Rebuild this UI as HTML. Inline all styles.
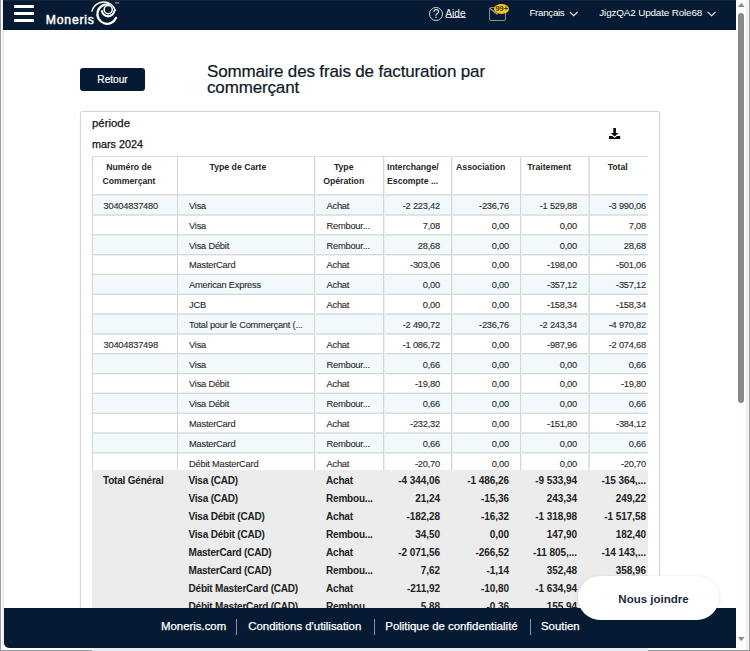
<!DOCTYPE html>
<html><head><meta charset="utf-8">
<style>
*{box-sizing:border-box;margin:0;padding:0}
html,body{width:750px;height:651px;overflow:hidden;background:#fff;font-family:"Liberation Sans",sans-serif;}
.abs{position:absolute}
.t{position:absolute;white-space:nowrap;line-height:1}
</style></head><body>

<div class="abs" style="left:0;top:0;width:1px;height:651px;background:#9a9a9a"></div>
<div class="abs" style="left:2px;top:0;width:2px;height:651px;background:#efefef"></div>
<div class="abs" style="left:0;top:650px;width:750px;height:1px;background:#9a9a9a"></div>
<div class="abs" style="left:80px;top:111px;width:580px;height:536px;border:1px solid #d6d6d6;border-radius:2px;box-shadow:0 0 3px rgba(0,0,0,0.06)"></div>
<div class="t" style="left:92px;top:117.6px;font-size:11.4px;color:#141414;-webkit-text-stroke:0.25px #141414">période</div>
<div class="t" style="left:92px;top:139.2px;font-size:10.8px;color:#141414;-webkit-text-stroke:0.25px #141414">mars 2024</div>
<svg class="abs" style="left:608px;top:127px" width="14" height="14" viewBox="0 0 14 14">
<path d="M5.3 1h2.6v5h2.6L6.6 9.6 2.7 6h2.6z" fill="#000"/>
<path d="M1 9h3.2l2.4 2 2.4-2H12.2v3H1z" fill="#000"/></svg>
<div class="abs" style="left:92px;top:156px;width:556px;height:500px;overflow:hidden">
<div class="abs" style="left:0;top:39.50px;width:600px;height:19.82px;background:#f2f9fc"></div>
<div class="abs" style="left:0;top:79.14px;width:600px;height:19.82px;background:#f2f9fc"></div>
<div class="abs" style="left:0;top:118.78px;width:600px;height:19.82px;background:#f2f9fc"></div>
<div class="abs" style="left:0;top:158.42px;width:600px;height:19.82px;background:#f2f9fc"></div>
<div class="abs" style="left:0;top:198.06px;width:600px;height:19.82px;background:#f2f9fc"></div>
<div class="abs" style="left:0;top:237.70px;width:600px;height:19.82px;background:#f2f9fc"></div>
<div class="abs" style="left:0;top:277.34px;width:600px;height:19.82px;background:#f2f9fc"></div>
<div class="abs" style="left:0;top:-1px;width:600px;height:1px;background:rgb(230,230,230)"></div>
<div class="abs" style="left:0;top:0px;width:600px;height:1px;background:rgb(222,222,222)"></div>
<div class="abs" style="left:0;top:38px;width:600px;height:1px;background:rgb(222,222,222)"></div>
<div class="abs" style="left:0;top:39px;width:600px;height:1px;background:rgb(230,230,230)"></div>
<div class="abs" style="left:0;top:58px;width:600px;height:1px;background:rgb(226,226,226)"></div>
<div class="abs" style="left:0;top:59px;width:600px;height:1px;background:rgb(226,226,226)"></div>
<div class="abs" style="left:0;top:78px;width:600px;height:1px;background:rgb(219,219,219)"></div>
<div class="abs" style="left:0;top:79px;width:600px;height:1px;background:rgb(234,234,234)"></div>
<div class="abs" style="left:0;top:97px;width:600px;height:1px;background:rgb(253,253,253)"></div>
<div class="abs" style="left:0;top:98px;width:600px;height:1px;background:rgb(214,214,214)"></div>
<div class="abs" style="left:0;top:99px;width:600px;height:1px;background:rgb(241,241,241)"></div>
<div class="abs" style="left:0;top:117px;width:600px;height:1px;background:rgb(245,245,245)"></div>
<div class="abs" style="left:0;top:118px;width:600px;height:1px;background:rgb(214,214,214)"></div>
<div class="abs" style="left:0;top:119px;width:600px;height:1px;background:rgb(248,248,248)"></div>
<div class="abs" style="left:0;top:137px;width:600px;height:1px;background:rgb(238,238,238)"></div>
<div class="abs" style="left:0;top:138px;width:600px;height:1px;background:rgb(215,215,215)"></div>
<div class="abs" style="left:0;top:157px;width:600px;height:1px;background:rgb(230,230,230)"></div>
<div class="abs" style="left:0;top:158px;width:600px;height:1px;background:rgb(222,222,222)"></div>
<div class="abs" style="left:0;top:177px;width:600px;height:1px;background:rgb(223,223,223)"></div>
<div class="abs" style="left:0;top:178px;width:600px;height:1px;background:rgb(230,230,230)"></div>
<div class="abs" style="left:0;top:197px;width:600px;height:1px;background:rgb(216,216,216)"></div>
<div class="abs" style="left:0;top:198px;width:600px;height:1px;background:rgb(237,237,237)"></div>
<div class="abs" style="left:0;top:216px;width:600px;height:1px;background:rgb(249,249,249)"></div>
<div class="abs" style="left:0;top:217px;width:600px;height:1px;background:rgb(214,214,214)"></div>
<div class="abs" style="left:0;top:218px;width:600px;height:1px;background:rgb(244,244,244)"></div>
<div class="abs" style="left:0;top:236px;width:600px;height:1px;background:rgb(242,242,242)"></div>
<div class="abs" style="left:0;top:237px;width:600px;height:1px;background:rgb(214,214,214)"></div>
<div class="abs" style="left:0;top:238px;width:600px;height:1px;background:rgb(252,252,252)"></div>
<div class="abs" style="left:0;top:256px;width:600px;height:1px;background:rgb(234,234,234)"></div>
<div class="abs" style="left:0;top:257px;width:600px;height:1px;background:rgb(218,218,218)"></div>
<div class="abs" style="left:0;top:276px;width:600px;height:1px;background:rgb(227,227,227)"></div>
<div class="abs" style="left:0;top:277px;width:600px;height:1px;background:rgb(225,225,225)"></div>
<div class="abs" style="left:0;top:296px;width:600px;height:1px;background:rgb(220,220,220)"></div>
<div class="abs" style="left:0;top:297px;width:600px;height:1px;background:rgb(233,233,233)"></div>
<div class="abs" style="left:0;top:315px;width:600px;height:1px;background:rgb(253,253,253)"></div>
<div class="abs" style="left:0;top:316px;width:600px;height:1px;background:rgb(214,214,214)"></div>
<div class="abs" style="left:0;top:317px;width:600px;height:1px;background:rgb(240,240,240)"></div>
<div class="abs" style="left:0px;top:0;width:1px;height:480px;background:rgb(214,214,214)"></div>
<div class="abs" style="left:85px;top:0;width:1px;height:480px;background:rgb(214,214,214)"></div>
<div class="abs" style="left:222px;top:0;width:1px;height:480px;background:rgb(214,214,214)"></div>
<div class="abs" style="left:223px;top:0;width:1px;height:480px;background:rgb(243,243,243)"></div>
<div class="abs" style="left:291px;top:0;width:1px;height:480px;background:rgb(214,214,214)"></div>
<div class="abs" style="left:292px;top:0;width:1px;height:480px;background:rgb(239,239,239)"></div>
<div class="abs" style="left:359px;top:0;width:1px;height:480px;background:rgb(218,218,218)"></div>
<div class="abs" style="left:360px;top:0;width:1px;height:480px;background:rgb(234,234,234)"></div>
<div class="abs" style="left:428px;top:0;width:1px;height:480px;background:rgb(214,214,214)"></div>
<div class="abs" style="left:429px;top:0;width:1px;height:480px;background:rgb(243,243,243)"></div>
<div class="abs" style="left:496px;top:0;width:1px;height:480px;background:rgb(230,230,230)"></div>
<div class="abs" style="left:497px;top:0;width:1px;height:480px;background:rgb(222,222,222)"></div>
<div class="abs" style="left:3.00px;top:3.5999999999999943px;width:67.90px;text-align:center;font-size:8.7px;font-weight:bold;line-height:14.3px;color:#262626;white-space:nowrap">Numéro de<br>Commerçant</div>
<div class="abs" style="left:86.00px;top:3.5999999999999943px;width:119.90px;text-align:center;font-size:8.7px;font-weight:bold;line-height:14.3px;color:#262626;white-space:nowrap">Type de Carte</div>
<div class="abs" style="left:226.00px;top:3.5999999999999943px;width:51.40px;text-align:center;font-size:8.7px;font-weight:bold;line-height:14.3px;color:#262626;white-space:nowrap">Type<br>Opération</div>
<div class="abs" style="left:295.00px;top:3.5999999999999943px;width:50.40px;text-align:center;font-size:8.7px;font-weight:bold;line-height:14.3px;color:#262626;white-space:nowrap">Interchange/<br>Escompte ...</div>
<div class="abs" style="left:363.00px;top:3.5999999999999943px;width:51.40px;text-align:center;font-size:8.7px;font-weight:bold;line-height:14.3px;color:#262626;white-space:nowrap">Association</div>
<div class="abs" style="left:432.00px;top:3.5999999999999943px;width:50.40px;text-align:center;font-size:8.7px;font-weight:bold;line-height:14.3px;color:#262626;white-space:nowrap">Traitement</div>
<div class="abs" style="left:500.00px;top:3.5999999999999943px;width:51.40px;text-align:center;font-size:8.7px;font-weight:bold;line-height:14.3px;color:#262626;white-space:nowrap">Total</div>
<div class="t" style="left:11.50px;top:46.00px;font-size:9.3px;letter-spacing:-0.22px;color:#2b2b2b;-webkit-text-stroke:0.12px #2b2b2b">30404837480</div>
<div class="t" style="left:97.00px;top:46.00px;font-size:9.3px;letter-spacing:-0.22px;color:#2b2b2b;-webkit-text-stroke:0.12px #2b2b2b">Visa</div>
<div class="t" style="left:234.50px;top:46.00px;font-size:9.3px;letter-spacing:-0.22px;color:#2b2b2b;-webkit-text-stroke:0.12px #2b2b2b">Achat</div>
<div class="t" style="left:292.00px;width:56.00px;text-align:right;top:46.00px;font-size:9.3px;letter-spacing:-0.22px;color:#2b2b2b;-webkit-text-stroke:0.12px #2b2b2b">-2 223,42</div>
<div class="t" style="left:360.00px;width:57.00px;text-align:right;top:46.00px;font-size:9.3px;letter-spacing:-0.22px;color:#2b2b2b;-webkit-text-stroke:0.12px #2b2b2b">-236,76</div>
<div class="t" style="left:429.00px;width:56.00px;text-align:right;top:46.00px;font-size:9.3px;letter-spacing:-0.22px;color:#2b2b2b;-webkit-text-stroke:0.12px #2b2b2b">-1 529,88</div>
<div class="t" style="left:497.00px;width:57.00px;text-align:right;top:46.00px;font-size:9.3px;letter-spacing:-0.22px;color:#2b2b2b;-webkit-text-stroke:0.12px #2b2b2b">-3 990,06</div>
<div class="t" style="left:97.00px;top:65.82px;font-size:9.3px;letter-spacing:-0.22px;color:#2b2b2b;-webkit-text-stroke:0.12px #2b2b2b">Visa</div>
<div class="t" style="left:234.50px;top:65.82px;font-size:9.3px;letter-spacing:-0.22px;color:#2b2b2b;-webkit-text-stroke:0.12px #2b2b2b">Rembour...</div>
<div class="t" style="left:292.00px;width:56.00px;text-align:right;top:65.82px;font-size:9.3px;letter-spacing:-0.22px;color:#2b2b2b;-webkit-text-stroke:0.12px #2b2b2b">7,08</div>
<div class="t" style="left:360.00px;width:57.00px;text-align:right;top:65.82px;font-size:9.3px;letter-spacing:-0.22px;color:#2b2b2b;-webkit-text-stroke:0.12px #2b2b2b">0,00</div>
<div class="t" style="left:429.00px;width:56.00px;text-align:right;top:65.82px;font-size:9.3px;letter-spacing:-0.22px;color:#2b2b2b;-webkit-text-stroke:0.12px #2b2b2b">0,00</div>
<div class="t" style="left:497.00px;width:57.00px;text-align:right;top:65.82px;font-size:9.3px;letter-spacing:-0.22px;color:#2b2b2b;-webkit-text-stroke:0.12px #2b2b2b">7,08</div>
<div class="t" style="left:97.00px;top:85.64px;font-size:9.3px;letter-spacing:-0.22px;color:#2b2b2b;-webkit-text-stroke:0.12px #2b2b2b">Visa Débit</div>
<div class="t" style="left:234.50px;top:85.64px;font-size:9.3px;letter-spacing:-0.22px;color:#2b2b2b;-webkit-text-stroke:0.12px #2b2b2b">Rembour...</div>
<div class="t" style="left:292.00px;width:56.00px;text-align:right;top:85.64px;font-size:9.3px;letter-spacing:-0.22px;color:#2b2b2b;-webkit-text-stroke:0.12px #2b2b2b">28,68</div>
<div class="t" style="left:360.00px;width:57.00px;text-align:right;top:85.64px;font-size:9.3px;letter-spacing:-0.22px;color:#2b2b2b;-webkit-text-stroke:0.12px #2b2b2b">0,00</div>
<div class="t" style="left:429.00px;width:56.00px;text-align:right;top:85.64px;font-size:9.3px;letter-spacing:-0.22px;color:#2b2b2b;-webkit-text-stroke:0.12px #2b2b2b">0,00</div>
<div class="t" style="left:497.00px;width:57.00px;text-align:right;top:85.64px;font-size:9.3px;letter-spacing:-0.22px;color:#2b2b2b;-webkit-text-stroke:0.12px #2b2b2b">28,68</div>
<div class="t" style="left:97.00px;top:105.46px;font-size:9.3px;letter-spacing:-0.22px;color:#2b2b2b;-webkit-text-stroke:0.12px #2b2b2b">MasterCard</div>
<div class="t" style="left:234.50px;top:105.46px;font-size:9.3px;letter-spacing:-0.22px;color:#2b2b2b;-webkit-text-stroke:0.12px #2b2b2b">Achat</div>
<div class="t" style="left:292.00px;width:56.00px;text-align:right;top:105.46px;font-size:9.3px;letter-spacing:-0.22px;color:#2b2b2b;-webkit-text-stroke:0.12px #2b2b2b">-303,06</div>
<div class="t" style="left:360.00px;width:57.00px;text-align:right;top:105.46px;font-size:9.3px;letter-spacing:-0.22px;color:#2b2b2b;-webkit-text-stroke:0.12px #2b2b2b">0,00</div>
<div class="t" style="left:429.00px;width:56.00px;text-align:right;top:105.46px;font-size:9.3px;letter-spacing:-0.22px;color:#2b2b2b;-webkit-text-stroke:0.12px #2b2b2b">-198,00</div>
<div class="t" style="left:497.00px;width:57.00px;text-align:right;top:105.46px;font-size:9.3px;letter-spacing:-0.22px;color:#2b2b2b;-webkit-text-stroke:0.12px #2b2b2b">-501,06</div>
<div class="t" style="left:97.00px;top:125.28px;font-size:9.3px;letter-spacing:-0.22px;color:#2b2b2b;-webkit-text-stroke:0.12px #2b2b2b">American Express</div>
<div class="t" style="left:234.50px;top:125.28px;font-size:9.3px;letter-spacing:-0.22px;color:#2b2b2b;-webkit-text-stroke:0.12px #2b2b2b">Achat</div>
<div class="t" style="left:292.00px;width:56.00px;text-align:right;top:125.28px;font-size:9.3px;letter-spacing:-0.22px;color:#2b2b2b;-webkit-text-stroke:0.12px #2b2b2b">0,00</div>
<div class="t" style="left:360.00px;width:57.00px;text-align:right;top:125.28px;font-size:9.3px;letter-spacing:-0.22px;color:#2b2b2b;-webkit-text-stroke:0.12px #2b2b2b">0,00</div>
<div class="t" style="left:429.00px;width:56.00px;text-align:right;top:125.28px;font-size:9.3px;letter-spacing:-0.22px;color:#2b2b2b;-webkit-text-stroke:0.12px #2b2b2b">-357,12</div>
<div class="t" style="left:497.00px;width:57.00px;text-align:right;top:125.28px;font-size:9.3px;letter-spacing:-0.22px;color:#2b2b2b;-webkit-text-stroke:0.12px #2b2b2b">-357,12</div>
<div class="t" style="left:97.00px;top:145.10px;font-size:9.3px;letter-spacing:-0.22px;color:#2b2b2b;-webkit-text-stroke:0.12px #2b2b2b">JCB</div>
<div class="t" style="left:234.50px;top:145.10px;font-size:9.3px;letter-spacing:-0.22px;color:#2b2b2b;-webkit-text-stroke:0.12px #2b2b2b">Achat</div>
<div class="t" style="left:292.00px;width:56.00px;text-align:right;top:145.10px;font-size:9.3px;letter-spacing:-0.22px;color:#2b2b2b;-webkit-text-stroke:0.12px #2b2b2b">0,00</div>
<div class="t" style="left:360.00px;width:57.00px;text-align:right;top:145.10px;font-size:9.3px;letter-spacing:-0.22px;color:#2b2b2b;-webkit-text-stroke:0.12px #2b2b2b">0,00</div>
<div class="t" style="left:429.00px;width:56.00px;text-align:right;top:145.10px;font-size:9.3px;letter-spacing:-0.22px;color:#2b2b2b;-webkit-text-stroke:0.12px #2b2b2b">-158,34</div>
<div class="t" style="left:497.00px;width:57.00px;text-align:right;top:145.10px;font-size:9.3px;letter-spacing:-0.22px;color:#2b2b2b;-webkit-text-stroke:0.12px #2b2b2b">-158,34</div>
<div class="t" style="left:97.00px;top:164.92px;font-size:9.3px;letter-spacing:-0.22px;color:#2b2b2b;-webkit-text-stroke:0.12px #2b2b2b">Total pour le Commerçant (...</div>
<div class="t" style="left:292.00px;width:56.00px;text-align:right;top:164.92px;font-size:9.3px;letter-spacing:-0.22px;color:#2b2b2b;-webkit-text-stroke:0.12px #2b2b2b">-2 490,72</div>
<div class="t" style="left:360.00px;width:57.00px;text-align:right;top:164.92px;font-size:9.3px;letter-spacing:-0.22px;color:#2b2b2b;-webkit-text-stroke:0.12px #2b2b2b">-236,76</div>
<div class="t" style="left:429.00px;width:56.00px;text-align:right;top:164.92px;font-size:9.3px;letter-spacing:-0.22px;color:#2b2b2b;-webkit-text-stroke:0.12px #2b2b2b">-2 243,34</div>
<div class="t" style="left:497.00px;width:57.00px;text-align:right;top:164.92px;font-size:9.3px;letter-spacing:-0.22px;color:#2b2b2b;-webkit-text-stroke:0.12px #2b2b2b">-4 970,82</div>
<div class="t" style="left:11.50px;top:184.74px;font-size:9.3px;letter-spacing:-0.22px;color:#2b2b2b;-webkit-text-stroke:0.12px #2b2b2b">30404837498</div>
<div class="t" style="left:97.00px;top:184.74px;font-size:9.3px;letter-spacing:-0.22px;color:#2b2b2b;-webkit-text-stroke:0.12px #2b2b2b">Visa</div>
<div class="t" style="left:234.50px;top:184.74px;font-size:9.3px;letter-spacing:-0.22px;color:#2b2b2b;-webkit-text-stroke:0.12px #2b2b2b">Achat</div>
<div class="t" style="left:292.00px;width:56.00px;text-align:right;top:184.74px;font-size:9.3px;letter-spacing:-0.22px;color:#2b2b2b;-webkit-text-stroke:0.12px #2b2b2b">-1 086,72</div>
<div class="t" style="left:360.00px;width:57.00px;text-align:right;top:184.74px;font-size:9.3px;letter-spacing:-0.22px;color:#2b2b2b;-webkit-text-stroke:0.12px #2b2b2b">0,00</div>
<div class="t" style="left:429.00px;width:56.00px;text-align:right;top:184.74px;font-size:9.3px;letter-spacing:-0.22px;color:#2b2b2b;-webkit-text-stroke:0.12px #2b2b2b">-987,96</div>
<div class="t" style="left:497.00px;width:57.00px;text-align:right;top:184.74px;font-size:9.3px;letter-spacing:-0.22px;color:#2b2b2b;-webkit-text-stroke:0.12px #2b2b2b">-2 074,68</div>
<div class="t" style="left:97.00px;top:204.56px;font-size:9.3px;letter-spacing:-0.22px;color:#2b2b2b;-webkit-text-stroke:0.12px #2b2b2b">Visa</div>
<div class="t" style="left:234.50px;top:204.56px;font-size:9.3px;letter-spacing:-0.22px;color:#2b2b2b;-webkit-text-stroke:0.12px #2b2b2b">Rembour...</div>
<div class="t" style="left:292.00px;width:56.00px;text-align:right;top:204.56px;font-size:9.3px;letter-spacing:-0.22px;color:#2b2b2b;-webkit-text-stroke:0.12px #2b2b2b">0,66</div>
<div class="t" style="left:360.00px;width:57.00px;text-align:right;top:204.56px;font-size:9.3px;letter-spacing:-0.22px;color:#2b2b2b;-webkit-text-stroke:0.12px #2b2b2b">0,00</div>
<div class="t" style="left:429.00px;width:56.00px;text-align:right;top:204.56px;font-size:9.3px;letter-spacing:-0.22px;color:#2b2b2b;-webkit-text-stroke:0.12px #2b2b2b">0,00</div>
<div class="t" style="left:497.00px;width:57.00px;text-align:right;top:204.56px;font-size:9.3px;letter-spacing:-0.22px;color:#2b2b2b;-webkit-text-stroke:0.12px #2b2b2b">0,66</div>
<div class="t" style="left:97.00px;top:224.38px;font-size:9.3px;letter-spacing:-0.22px;color:#2b2b2b;-webkit-text-stroke:0.12px #2b2b2b">Visa Débit</div>
<div class="t" style="left:234.50px;top:224.38px;font-size:9.3px;letter-spacing:-0.22px;color:#2b2b2b;-webkit-text-stroke:0.12px #2b2b2b">Achat</div>
<div class="t" style="left:292.00px;width:56.00px;text-align:right;top:224.38px;font-size:9.3px;letter-spacing:-0.22px;color:#2b2b2b;-webkit-text-stroke:0.12px #2b2b2b">-19,80</div>
<div class="t" style="left:360.00px;width:57.00px;text-align:right;top:224.38px;font-size:9.3px;letter-spacing:-0.22px;color:#2b2b2b;-webkit-text-stroke:0.12px #2b2b2b">0,00</div>
<div class="t" style="left:429.00px;width:56.00px;text-align:right;top:224.38px;font-size:9.3px;letter-spacing:-0.22px;color:#2b2b2b;-webkit-text-stroke:0.12px #2b2b2b">0,00</div>
<div class="t" style="left:497.00px;width:57.00px;text-align:right;top:224.38px;font-size:9.3px;letter-spacing:-0.22px;color:#2b2b2b;-webkit-text-stroke:0.12px #2b2b2b">-19,80</div>
<div class="t" style="left:97.00px;top:244.20px;font-size:9.3px;letter-spacing:-0.22px;color:#2b2b2b;-webkit-text-stroke:0.12px #2b2b2b">Visa Débit</div>
<div class="t" style="left:234.50px;top:244.20px;font-size:9.3px;letter-spacing:-0.22px;color:#2b2b2b;-webkit-text-stroke:0.12px #2b2b2b">Rembour...</div>
<div class="t" style="left:292.00px;width:56.00px;text-align:right;top:244.20px;font-size:9.3px;letter-spacing:-0.22px;color:#2b2b2b;-webkit-text-stroke:0.12px #2b2b2b">0,66</div>
<div class="t" style="left:360.00px;width:57.00px;text-align:right;top:244.20px;font-size:9.3px;letter-spacing:-0.22px;color:#2b2b2b;-webkit-text-stroke:0.12px #2b2b2b">0,00</div>
<div class="t" style="left:429.00px;width:56.00px;text-align:right;top:244.20px;font-size:9.3px;letter-spacing:-0.22px;color:#2b2b2b;-webkit-text-stroke:0.12px #2b2b2b">0,00</div>
<div class="t" style="left:497.00px;width:57.00px;text-align:right;top:244.20px;font-size:9.3px;letter-spacing:-0.22px;color:#2b2b2b;-webkit-text-stroke:0.12px #2b2b2b">0,66</div>
<div class="t" style="left:97.00px;top:264.02px;font-size:9.3px;letter-spacing:-0.22px;color:#2b2b2b;-webkit-text-stroke:0.12px #2b2b2b">MasterCard</div>
<div class="t" style="left:234.50px;top:264.02px;font-size:9.3px;letter-spacing:-0.22px;color:#2b2b2b;-webkit-text-stroke:0.12px #2b2b2b">Achat</div>
<div class="t" style="left:292.00px;width:56.00px;text-align:right;top:264.02px;font-size:9.3px;letter-spacing:-0.22px;color:#2b2b2b;-webkit-text-stroke:0.12px #2b2b2b">-232,32</div>
<div class="t" style="left:360.00px;width:57.00px;text-align:right;top:264.02px;font-size:9.3px;letter-spacing:-0.22px;color:#2b2b2b;-webkit-text-stroke:0.12px #2b2b2b">0,00</div>
<div class="t" style="left:429.00px;width:56.00px;text-align:right;top:264.02px;font-size:9.3px;letter-spacing:-0.22px;color:#2b2b2b;-webkit-text-stroke:0.12px #2b2b2b">-151,80</div>
<div class="t" style="left:497.00px;width:57.00px;text-align:right;top:264.02px;font-size:9.3px;letter-spacing:-0.22px;color:#2b2b2b;-webkit-text-stroke:0.12px #2b2b2b">-384,12</div>
<div class="t" style="left:97.00px;top:283.84px;font-size:9.3px;letter-spacing:-0.22px;color:#2b2b2b;-webkit-text-stroke:0.12px #2b2b2b">MasterCard</div>
<div class="t" style="left:234.50px;top:283.84px;font-size:9.3px;letter-spacing:-0.22px;color:#2b2b2b;-webkit-text-stroke:0.12px #2b2b2b">Rembour...</div>
<div class="t" style="left:292.00px;width:56.00px;text-align:right;top:283.84px;font-size:9.3px;letter-spacing:-0.22px;color:#2b2b2b;-webkit-text-stroke:0.12px #2b2b2b">0,66</div>
<div class="t" style="left:360.00px;width:57.00px;text-align:right;top:283.84px;font-size:9.3px;letter-spacing:-0.22px;color:#2b2b2b;-webkit-text-stroke:0.12px #2b2b2b">0,00</div>
<div class="t" style="left:429.00px;width:56.00px;text-align:right;top:283.84px;font-size:9.3px;letter-spacing:-0.22px;color:#2b2b2b;-webkit-text-stroke:0.12px #2b2b2b">0,00</div>
<div class="t" style="left:497.00px;width:57.00px;text-align:right;top:283.84px;font-size:9.3px;letter-spacing:-0.22px;color:#2b2b2b;-webkit-text-stroke:0.12px #2b2b2b">0,66</div>
<div class="t" style="left:97.00px;top:303.66px;font-size:9.3px;letter-spacing:-0.22px;color:#2b2b2b;-webkit-text-stroke:0.12px #2b2b2b">Débit MasterCard</div>
<div class="t" style="left:234.50px;top:303.66px;font-size:9.3px;letter-spacing:-0.22px;color:#2b2b2b;-webkit-text-stroke:0.12px #2b2b2b">Achat</div>
<div class="t" style="left:292.00px;width:56.00px;text-align:right;top:303.66px;font-size:9.3px;letter-spacing:-0.22px;color:#2b2b2b;-webkit-text-stroke:0.12px #2b2b2b">-20,70</div>
<div class="t" style="left:360.00px;width:57.00px;text-align:right;top:303.66px;font-size:9.3px;letter-spacing:-0.22px;color:#2b2b2b;-webkit-text-stroke:0.12px #2b2b2b">0,00</div>
<div class="t" style="left:429.00px;width:56.00px;text-align:right;top:303.66px;font-size:9.3px;letter-spacing:-0.22px;color:#2b2b2b;-webkit-text-stroke:0.12px #2b2b2b">0,00</div>
<div class="t" style="left:497.00px;width:57.00px;text-align:right;top:303.66px;font-size:9.3px;letter-spacing:-0.22px;color:#2b2b2b;-webkit-text-stroke:0.12px #2b2b2b">-20,70</div>
<div class="abs" style="left:0;top:314.20px;width:600px;height:300px;background:#ececec"></div>
<div class="t" style="left:11.00px;top:319.60px;font-size:10px;letter-spacing:-0.2px;font-weight:bold;color:#222">Total Général</div>
<div class="t" style="left:96.50px;top:319.60px;font-size:10px;letter-spacing:-0.2px;font-weight:bold;color:#222">Visa (CAD)</div>
<div class="t" style="left:234.00px;top:319.60px;font-size:10px;letter-spacing:-0.2px;font-weight:bold;color:#222">Achat</div>
<div class="t" style="left:292.00px;width:56.00px;text-align:right;top:319.60px;font-size:10px;letter-spacing:-0.05px;font-weight:bold;color:#222">-4 344,06</div>
<div class="t" style="left:360.00px;width:57.00px;text-align:right;top:319.60px;font-size:10px;letter-spacing:-0.05px;font-weight:bold;color:#222">-1 486,26</div>
<div class="t" style="left:429.00px;width:56.00px;text-align:right;top:319.60px;font-size:10px;letter-spacing:-0.05px;font-weight:bold;color:#222">-9 533,94</div>
<div class="t" style="left:497.00px;width:57.00px;text-align:right;top:319.60px;font-size:10px;letter-spacing:-0.05px;font-weight:bold;color:#222">-15 364,...</div>
<div class="t" style="left:96.50px;top:337.70px;font-size:10px;letter-spacing:-0.2px;font-weight:bold;color:#222">Visa (CAD)</div>
<div class="t" style="left:234.00px;top:337.70px;font-size:10px;letter-spacing:-0.2px;font-weight:bold;color:#222">Rembou...</div>
<div class="t" style="left:292.00px;width:56.00px;text-align:right;top:337.70px;font-size:10px;letter-spacing:-0.05px;font-weight:bold;color:#222">21,24</div>
<div class="t" style="left:360.00px;width:57.00px;text-align:right;top:337.70px;font-size:10px;letter-spacing:-0.05px;font-weight:bold;color:#222">-15,36</div>
<div class="t" style="left:429.00px;width:56.00px;text-align:right;top:337.70px;font-size:10px;letter-spacing:-0.05px;font-weight:bold;color:#222">243,34</div>
<div class="t" style="left:497.00px;width:57.00px;text-align:right;top:337.70px;font-size:10px;letter-spacing:-0.05px;font-weight:bold;color:#222">249,22</div>
<div class="t" style="left:96.50px;top:355.80px;font-size:10px;letter-spacing:-0.2px;font-weight:bold;color:#222">Visa Débit (CAD)</div>
<div class="t" style="left:234.00px;top:355.80px;font-size:10px;letter-spacing:-0.2px;font-weight:bold;color:#222">Achat</div>
<div class="t" style="left:292.00px;width:56.00px;text-align:right;top:355.80px;font-size:10px;letter-spacing:-0.05px;font-weight:bold;color:#222">-182,28</div>
<div class="t" style="left:360.00px;width:57.00px;text-align:right;top:355.80px;font-size:10px;letter-spacing:-0.05px;font-weight:bold;color:#222">-16,32</div>
<div class="t" style="left:429.00px;width:56.00px;text-align:right;top:355.80px;font-size:10px;letter-spacing:-0.05px;font-weight:bold;color:#222">-1 318,98</div>
<div class="t" style="left:497.00px;width:57.00px;text-align:right;top:355.80px;font-size:10px;letter-spacing:-0.05px;font-weight:bold;color:#222">-1 517,58</div>
<div class="t" style="left:96.50px;top:373.90px;font-size:10px;letter-spacing:-0.2px;font-weight:bold;color:#222">Visa Débit (CAD)</div>
<div class="t" style="left:234.00px;top:373.90px;font-size:10px;letter-spacing:-0.2px;font-weight:bold;color:#222">Rembou...</div>
<div class="t" style="left:292.00px;width:56.00px;text-align:right;top:373.90px;font-size:10px;letter-spacing:-0.05px;font-weight:bold;color:#222">34,50</div>
<div class="t" style="left:360.00px;width:57.00px;text-align:right;top:373.90px;font-size:10px;letter-spacing:-0.05px;font-weight:bold;color:#222">0,00</div>
<div class="t" style="left:429.00px;width:56.00px;text-align:right;top:373.90px;font-size:10px;letter-spacing:-0.05px;font-weight:bold;color:#222">147,90</div>
<div class="t" style="left:497.00px;width:57.00px;text-align:right;top:373.90px;font-size:10px;letter-spacing:-0.05px;font-weight:bold;color:#222">182,40</div>
<div class="t" style="left:96.50px;top:392.00px;font-size:10px;letter-spacing:-0.2px;font-weight:bold;color:#222">MasterCard (CAD)</div>
<div class="t" style="left:234.00px;top:392.00px;font-size:10px;letter-spacing:-0.2px;font-weight:bold;color:#222">Achat</div>
<div class="t" style="left:292.00px;width:56.00px;text-align:right;top:392.00px;font-size:10px;letter-spacing:-0.05px;font-weight:bold;color:#222">-2 071,56</div>
<div class="t" style="left:360.00px;width:57.00px;text-align:right;top:392.00px;font-size:10px;letter-spacing:-0.05px;font-weight:bold;color:#222">-266,52</div>
<div class="t" style="left:429.00px;width:56.00px;text-align:right;top:392.00px;font-size:10px;letter-spacing:-0.05px;font-weight:bold;color:#222">-11 805,...</div>
<div class="t" style="left:497.00px;width:57.00px;text-align:right;top:392.00px;font-size:10px;letter-spacing:-0.05px;font-weight:bold;color:#222">-14 143,...</div>
<div class="t" style="left:96.50px;top:410.10px;font-size:10px;letter-spacing:-0.2px;font-weight:bold;color:#222">MasterCard (CAD)</div>
<div class="t" style="left:234.00px;top:410.10px;font-size:10px;letter-spacing:-0.2px;font-weight:bold;color:#222">Rembou...</div>
<div class="t" style="left:292.00px;width:56.00px;text-align:right;top:410.10px;font-size:10px;letter-spacing:-0.05px;font-weight:bold;color:#222">7,62</div>
<div class="t" style="left:360.00px;width:57.00px;text-align:right;top:410.10px;font-size:10px;letter-spacing:-0.05px;font-weight:bold;color:#222">-1,14</div>
<div class="t" style="left:429.00px;width:56.00px;text-align:right;top:410.10px;font-size:10px;letter-spacing:-0.05px;font-weight:bold;color:#222">352,48</div>
<div class="t" style="left:497.00px;width:57.00px;text-align:right;top:410.10px;font-size:10px;letter-spacing:-0.05px;font-weight:bold;color:#222">358,96</div>
<div class="t" style="left:96.50px;top:428.20px;font-size:10px;letter-spacing:-0.2px;font-weight:bold;color:#222">Débit MasterCard (CAD)</div>
<div class="t" style="left:234.00px;top:428.20px;font-size:10px;letter-spacing:-0.2px;font-weight:bold;color:#222">Achat</div>
<div class="t" style="left:292.00px;width:56.00px;text-align:right;top:428.20px;font-size:10px;letter-spacing:-0.05px;font-weight:bold;color:#222">-211,92</div>
<div class="t" style="left:360.00px;width:57.00px;text-align:right;top:428.20px;font-size:10px;letter-spacing:-0.05px;font-weight:bold;color:#222">-10,80</div>
<div class="t" style="left:429.00px;width:56.00px;text-align:right;top:428.20px;font-size:10px;letter-spacing:-0.05px;font-weight:bold;color:#222">-1 634,94</div>
<div class="t" style="left:497.00px;width:57.00px;text-align:right;top:428.20px;font-size:10px;letter-spacing:-0.05px;font-weight:bold;color:#222">-1 846,86</div>
<div class="t" style="left:96.50px;top:446.30px;font-size:10px;letter-spacing:-0.2px;font-weight:bold;color:#222">Débit MasterCard (CAD)</div>
<div class="t" style="left:234.00px;top:446.30px;font-size:10px;letter-spacing:-0.2px;font-weight:bold;color:#222">Rembou...</div>
<div class="t" style="left:292.00px;width:56.00px;text-align:right;top:446.30px;font-size:10px;letter-spacing:-0.05px;font-weight:bold;color:#222">5,88</div>
<div class="t" style="left:360.00px;width:57.00px;text-align:right;top:446.30px;font-size:10px;letter-spacing:-0.05px;font-weight:bold;color:#222">-0,36</div>
<div class="t" style="left:429.00px;width:56.00px;text-align:right;top:446.30px;font-size:10px;letter-spacing:-0.05px;font-weight:bold;color:#222">155,94</div>
<div class="t" style="left:497.00px;width:57.00px;text-align:right;top:446.30px;font-size:10px;letter-spacing:-0.05px;font-weight:bold;color:#222">161,46</div>
</div>
<div class="abs" style="left:80px;top:68px;width:65px;height:23px;background:#061b33;border-radius:3px"></div>
<div class="t" style="left:80px;top:74.8px;width:65px;text-align:center;font-size:10.1px;color:#fff;-webkit-text-stroke:0.2px #fff">Retour</div>
<div class="t" style="left:207px;top:64px;font-size:17px;letter-spacing:-0.15px;line-height:16px;color:#0e1826;-webkit-text-stroke:0.2px #0e1826">Sommaire des frais de facturation par<br>commerçant</div>
<div class="abs" style="left:3px;top:0;width:733px;height:30px;background:#061b33"></div>
<div class="abs" style="left:3px;top:0;width:733px;height:1px;background:#13263d"></div>
<div class="abs" style="left:14px;top:5.2px;width:20px;height:3px;background:#fff;border-radius:1px"></div>
<div class="abs" style="left:14px;top:12px;width:20px;height:3px;background:#fff;border-radius:1px"></div>
<div class="abs" style="left:14px;top:19px;width:20px;height:3px;background:#fff;border-radius:1px"></div>
<div class="t" style="left:45.8px;top:14.2px;font-size:12.2px;color:#fff;letter-spacing:0.8px;-webkit-text-stroke:0.45px #fff">Moneris</div>
<svg class="abs" style="left:88px;top:0" width="36" height="28" viewBox="88 0 36 28">
<g fill="none" stroke="#fff" stroke-linecap="round">
<path d="M91.9 11.1 A12.2 12.2 0 0 1 115.4 10.6" stroke-width="1.5"/>
<path d="M108.6 4.5 A9.7 9.7 0 1 0 116 17.9" stroke-width="2.3"/>
<circle cx="108.2" cy="9.6" r="4.1" stroke-width="1.5"/>
</g>
<path d="M100.9 10.2 A7.2 7.2 0 0 0 115.3 10.2 L113.4 10.2 A5.25 5 0 0 1 102.9 10.2 Z" fill="#fff"/>
<rect x="115" y="2.2" width="4" height="1.4" fill="#7f8894"/>
</svg>
<div class="abs" style="left:428.8px;top:6.8px;width:14.2px;height:14.2px;border:1.1px solid #d4d4d4;border-radius:50%"></div>
<div class="t" style="left:429px;top:8.2px;width:14.2px;text-align:center;font-size:12px;color:#e8e8e8">?</div>
<div class="t" style="left:445.3px;top:8.6px;font-size:10.1px;color:#fff">Aide</div>
<div class="abs" style="left:445.5px;top:17.2px;width:20.5px;height:1px;background:#c9ccd2"></div>
<div class="abs" style="left:489px;top:7px;width:17px;height:13.5px;border:1.3px solid #8d8d8d;border-radius:2px"></div>
<svg class="abs" style="left:489px;top:7px" width="17" height="14"><path d="M1 1.5 L8.6 7.4" stroke="#9a9a9a" stroke-width="1.4" fill="none"/></svg>
<div class="abs" style="left:494px;top:3.7px;width:15px;height:10px;background:#f5c518;border-radius:50%"></div>
<div class="t" style="left:494px;top:5px;width:15.5px;text-align:center;font-size:7.4px;font-weight:bold;color:#3a3a10">99+</div>
<div class="t" style="left:529.4px;top:8.1px;font-size:9.9px;letter-spacing:-0.35px;color:#fff">Français</div>
<svg class="abs" style="left:568px;top:9px" width="12" height="9"><path d="M1.8 3 L5.7 6.6 L9.6 3" stroke="#e6e6e6" stroke-width="1.15" fill="none"/></svg>
<div class="t" style="left:599.3px;top:8.1px;font-size:9.9px;letter-spacing:-0.15px;color:#fff">JigzQA2 Update Role68</div>
<svg class="abs" style="left:706px;top:9px" width="12" height="9"><path d="M1.6 2.8 L5.6 6.6 L9.6 2.8" stroke="#e6e6e6" stroke-width="1.15" fill="none"/></svg>
<div class="abs" style="left:3.5px;top:607.5px;width:732.5px;height:40px;background:#061b33;border-bottom-left-radius:5px"></div>
<div class="t" style="left:161px;top:620.5px;font-size:11.4px;color:#fff;-webkit-text-stroke:0.25px #fff">Moneris.com</div>
<div class="t" style="left:248.3px;top:620.5px;font-size:11.4px;color:#fff;-webkit-text-stroke:0.25px #fff">Conditions d'utilisation</div>
<div class="t" style="left:385.3px;top:620.5px;font-size:11.4px;color:#fff;-webkit-text-stroke:0.25px #fff">Politique de confidentialité</div>
<div class="t" style="left:541px;top:620.5px;font-size:11.4px;color:#fff;-webkit-text-stroke:0.25px #fff">Soutien</div>
<div class="abs" style="left:236.2px;top:619px;width:1px;height:16px;background:#8a93a0"></div>
<div class="abs" style="left:373.5px;top:619px;width:1px;height:16px;background:#8a93a0"></div>
<div class="abs" style="left:529.5px;top:619px;width:1px;height:16px;background:#8a93a0"></div>
<div class="abs" style="left:578px;top:576px;width:141px;height:44px;background:#fff;border-radius:22px;box-shadow:0 1px 4px rgba(0,0,0,0.12)"></div>
<div class="t" style="left:583px;top:593.5px;width:141px;text-align:center;font-size:11.5px;font-weight:bold;color:#1b2a3d">Nous joindre</div>
<div class="abs" style="left:736px;top:0;width:13px;height:650px;background:#fdfdfd"></div>
<div class="abs" style="left:745.5px;top:0;width:2.5px;height:650px;background:#f1f1f1"></div>
<div class="abs" style="left:749px;top:0;width:1px;height:651px;background:#9a9a9a"></div>
<svg class="abs" style="left:736px;top:0" width="13" height="650"><path d="M2 7 L5.3 2.8 L8.6 7z" fill="#8a8a8a"/><path d="M2 637 L5.3 641.2 L8.6 637z" fill="#8a8a8a"/></svg>
<div class="abs" style="left:738.2px;top:13px;width:6.3px;height:390px;background:#8a8a8a;border-radius:3.5px"></div>
</body></html>
